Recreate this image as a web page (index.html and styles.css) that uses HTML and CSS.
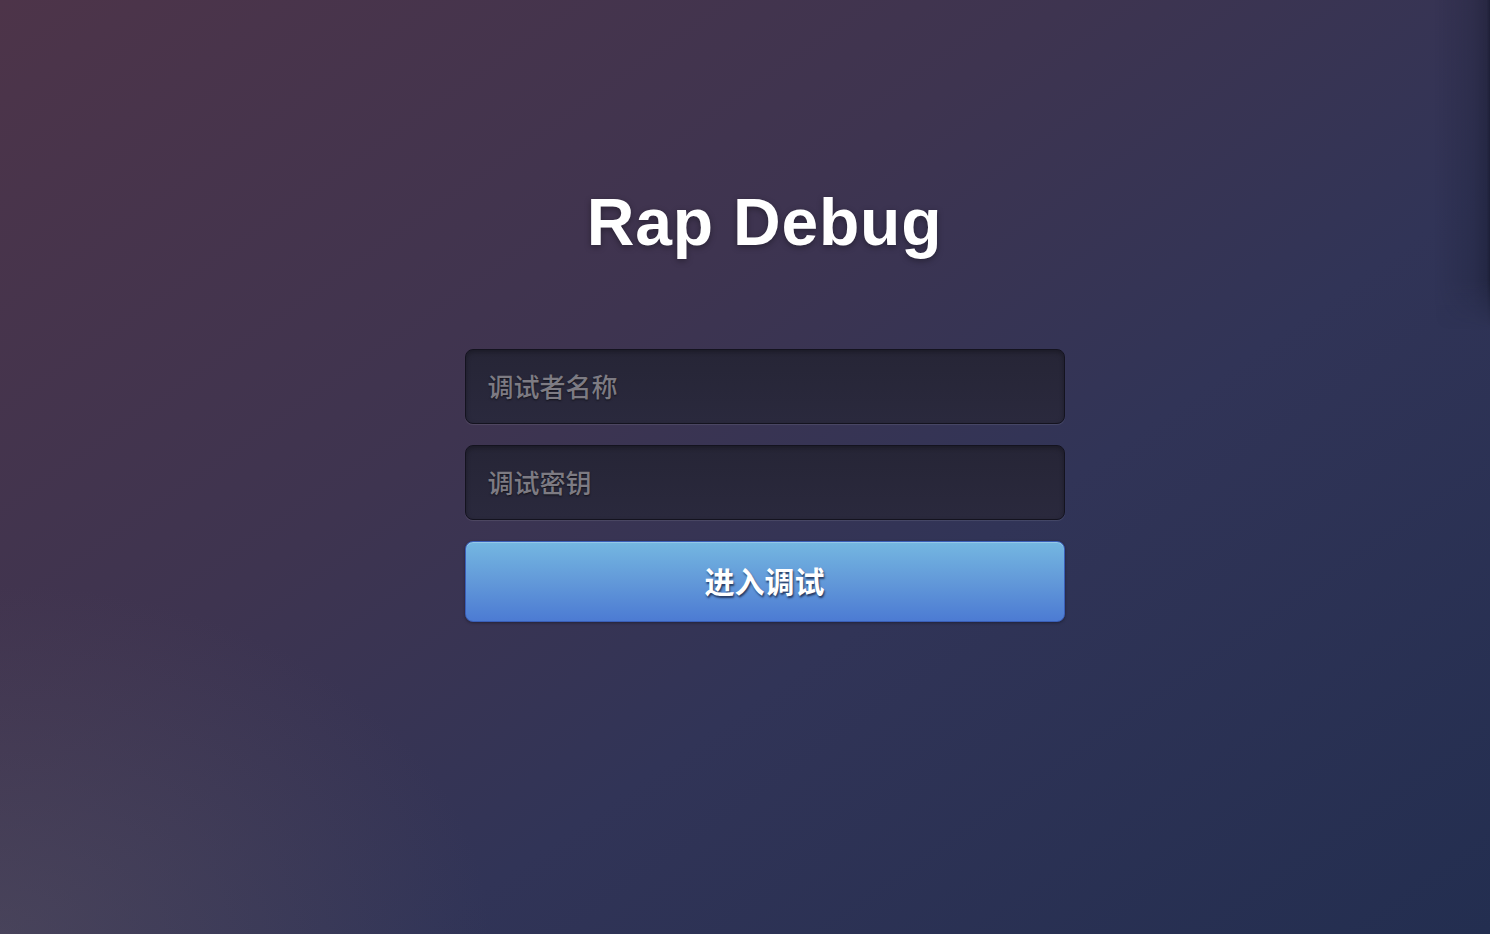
FILE: index.html
```html
<!DOCTYPE html>
<html lang="zh-CN">
<head>
<meta charset="utf-8">
<title>Rap Debug</title>
<link rel="stylesheet" href="styles.css">
</head>
<body>
<div class="page">
  <main class="login">
    <h1 class="title">Rap Debug</h1>
    <form class="form">
      <input class="field" type="text" placeholder="调试者名称">
      <input class="field" type="password" placeholder="调试密钥">
      <button class="submit" type="button">进入调试</button>
    </form>
  </main>
  <div class="edge-shadow"></div>
</div>
</body>
</html>
```

FILE: styles.css
```css
* { box-sizing: border-box; }
html, body {
  margin: 0;
  padding: 0;
  height: 100%;
}
body {
  font-family: "Liberation Sans", "Noto Sans CJK SC", sans-serif;
  background: #363550;
  overflow: hidden;
}
.page {
  position: relative;
  width: 100%;
  height: 934px;
  background:
    radial-gradient(ellipse 700px 500px at 0% 100%, rgba(90, 85, 100, 0.45), rgba(90, 85, 100, 0) 70%),
    linear-gradient(145deg, #4d3449 0%, #3e3450 38%, #313457 62%, #232e50 100%);
}
.login {
  display: flex;
  flex-direction: column;
  align-items: center;
  padding-top: 189px;
  padding-left: 39px;
}
.title {
  margin: 0;
  font-size: 66px;
  line-height: 66px;
  font-weight: bold;
  letter-spacing: 0.8px;
  color: #ffffff;
  text-shadow: 0 2px 6px rgba(0, 0, 0, 0.35);
}
.form {
  margin-top: 94px;
  width: 600px;
  display: flex;
  flex-direction: column;
  gap: 21px;
}
.field {
  display: block;
  width: 100%;
  height: 75px;
  margin: 0;
  padding: 3px 22px 0;
  border: 1px solid #14131f;
  border-radius: 8px;
  background: linear-gradient(180deg, #262536 0%, #2a293d 100%);
  box-shadow: inset 0 2px 5px rgba(0, 0, 0, 0.3), 0 1px 1px rgba(255, 255, 255, 0.1);
  font-family: "Liberation Sans", "Noto Sans CJK SC", sans-serif;
  font-size: 26px;
  font-weight: 500;
  color: #dddddd;
  outline: none;
}
.field::placeholder {
  color: #7d7b83;
  font-weight: 500;
  text-shadow: 0 1px 2px rgba(0, 0, 0, 0.6);
}
.submit {
  display: block;
  width: 100%;
  height: 81px;
  margin: 0;
  padding: 0 0 4px;
  border: 1px solid #3a5fb8;
  border-radius: 8px;
  background: linear-gradient(180deg, #74b7e1 0%, #6299d9 50%, #4c7bd3 100%);
  box-shadow: inset 0 1px 0 rgba(255, 255, 255, 0.25), 0 1px 3px rgba(0, 0, 0, 0.35);
  font-family: "Liberation Sans", "Noto Sans CJK SC", sans-serif;
  font-size: 30px;
  font-weight: bold;
  color: #ffffff;
  text-shadow: 1px 2px 2px rgba(20, 30, 60, 0.75);
  cursor: pointer;
}
.edge-shadow {
  position: absolute;
  top: 0;
  right: 0;
  width: 55px;
  height: 330px;
  background: linear-gradient(90deg, rgba(15, 18, 35, 0) 0%, rgba(15, 18, 35, 0.18) 70%, rgba(15, 18, 35, 0.35) 94%, rgba(15, 18, 35, 0.6) 100%);
  -webkit-mask-image: linear-gradient(180deg, #000 85%, transparent 100%);
  mask-image: linear-gradient(180deg, #000 85%, transparent 100%);
  pointer-events: none;
}
```
